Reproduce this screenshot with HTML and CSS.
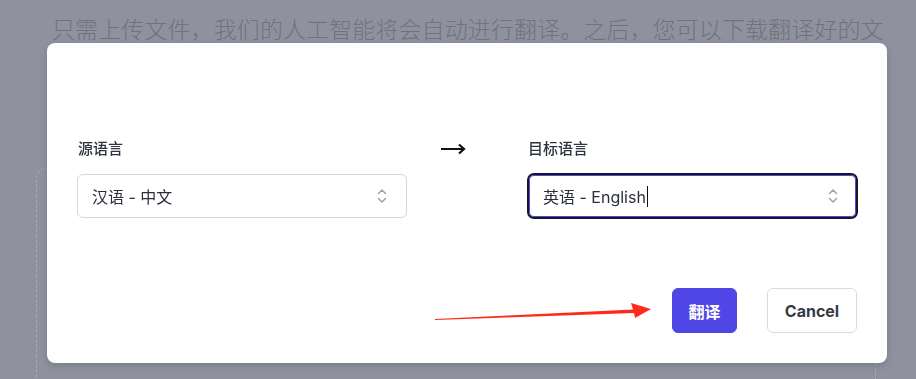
FILE: index.html
```html
<!DOCTYPE html>
<html lang="zh">
<head>
<meta charset="utf-8">
<link rel="stylesheet" href="styles.css">
</head>
<body>
<div class="page">
  <p class="intro">只需上传文件，我们的人工智能将会自动进行翻译。之后，您可以下载翻译好的文</p>
  <div class="dropzone"></div>
</div>

<div class="modal">
  <div class="langs">
    <div class="field">
      <label class="label">源语言</label>
      <div class="select">
        <span class="value">汉语 - 中文</span>
        <svg class="chev" viewBox="0 0 20 20" width="20" height="20"><path d="M6.5 7.5 10 4 13.5 7.5M6.5 12.5 10 16 13.5 12.5" fill="none" stroke="#9ca3af" stroke-width="1.5" stroke-linecap="round" stroke-linejoin="round"/></svg>
      </div>
    </div>
    <div class="swap">
      <svg viewBox="0 0 26 12" width="26" height="12"><path d="M1 6H24M19 1.5 24 6 19 10.5" fill="none" stroke="#111" stroke-width="2.2" stroke-linejoin="miter"/></svg>
    </div>
    <div class="field">
      <label class="label">目标语言</label>
      <div class="select focused">
        <span class="value">英语 - English<span class="caret"></span></span>
        <svg class="chev" viewBox="0 0 20 20" width="20" height="20"><path d="M6.5 7.5 10 4 13.5 7.5M6.5 12.5 10 16 13.5 12.5" fill="none" stroke="#9ca3af" stroke-width="1.5" stroke-linecap="round" stroke-linejoin="round"/></svg>
      </div>
    </div>
  </div>
  <div class="actions">
    <button class="btn primary">翻译</button>
    <button class="btn secondary">Cancel</button>
  </div>
  <svg class="pointer" width="230" height="26" viewBox="0 0 230 26">
    <polygon points="0,20 198,10.5 196,4 216,10 200,19 199,14 0,21" fill="#ff2a1a"/>
  </svg>
</div>
</body>
</html>
```
FILE: styles.css
```css
html, body {
  margin: 0;
  height: 100%;
}
body {
  background: #8f929e;
  font-family: Inter, "Noto Sans CJK SC", sans-serif;
  overflow: hidden;
}
.page {
  padding: 12px 36px 0 36px;
}
.intro {
  margin: 0 0 0 16px;
  font-family: "Noto Sans CJK SC", sans-serif;
  font-weight: 300;
  font-size: 23px;
  line-height: 32px;
  color: #70737d;
  white-space: nowrap;
  letter-spacing: 0.1px;
}
.dropzone {
  margin-top: 124px;
  width: 838px;
  height: 211px;
  border: 1.5px dashed #a9acb6;
  border-bottom: none;
  border-radius: 10px 10px 0 0;
}
.modal {
  position: fixed;
  left: 47px;
  top: 43px;
  width: 840px;
  height: 320px;
  box-sizing: border-box;
  background: #fff;
  border-radius: 8px;
  box-shadow: 0 3px 6px rgba(60, 64, 80, 0.25);
  padding: 97px 29px 30px 30px;
  display: flex;
  flex-direction: column;
}
.langs {
  display: grid;
  grid-template-columns: 330px 120px 331px;
  align-items: start;
}
.field {
  display: flex;
  flex-direction: column;
}
.label {
  font-size: 15px;
  line-height: 20px;
  font-weight: 500;
  color: #2d3340;
  padding-left: 1px;
  margin-bottom: 15px;
  margin-top: -1px;
}
.select {
  height: 44px;
  box-sizing: border-box;
  border: 1px solid #d5d8de;
  border-radius: 6px;
  display: flex;
  align-items: center;
  justify-content: space-between;
  padding: 0 14px 0 14px;
  font-size: 16px;
  color: #2a2f3a;
}
.select.focused {
  border: 2px solid #151725;
  box-shadow: inset 0 0 0 1px #5046e5;
  border-radius: 7px;
  height: 46px;
  margin-top: -1px;
  padding-right: 13px;
}
.value {
  display: flex;
  align-items: center;
}
.caret {
  display: inline-block;
  width: 1px;
  height: 21px;
  background: #111;
  margin-left: 1px;
}
.swap {
  padding-left: 33px;
  padding-top: 3px;
  display: flex;
}
.actions {
  margin-top: auto;
  display: flex;
  justify-content: flex-end;
  gap: 30px;
  padding-right: 1px;
}
.btn {
  height: 45px;
  border-radius: 6px;
  font-family: Inter, "Noto Sans CJK SC", sans-serif;
  font-size: 16px;
  font-weight: 700;
  box-sizing: border-box;
  padding: 0 15px;
}
.primary {
  background: #4f46e5;
  color: #fff;
  border: 1px solid #4f46e5;
  width: 65px;
}
.secondary {
  background: #fff;
  color: #363a45;
  border: 1px solid #d8dbe0;
  width: 90px;
}
.pointer {
  position: absolute;
  left: 388px;
  top: 256px;
}
```
